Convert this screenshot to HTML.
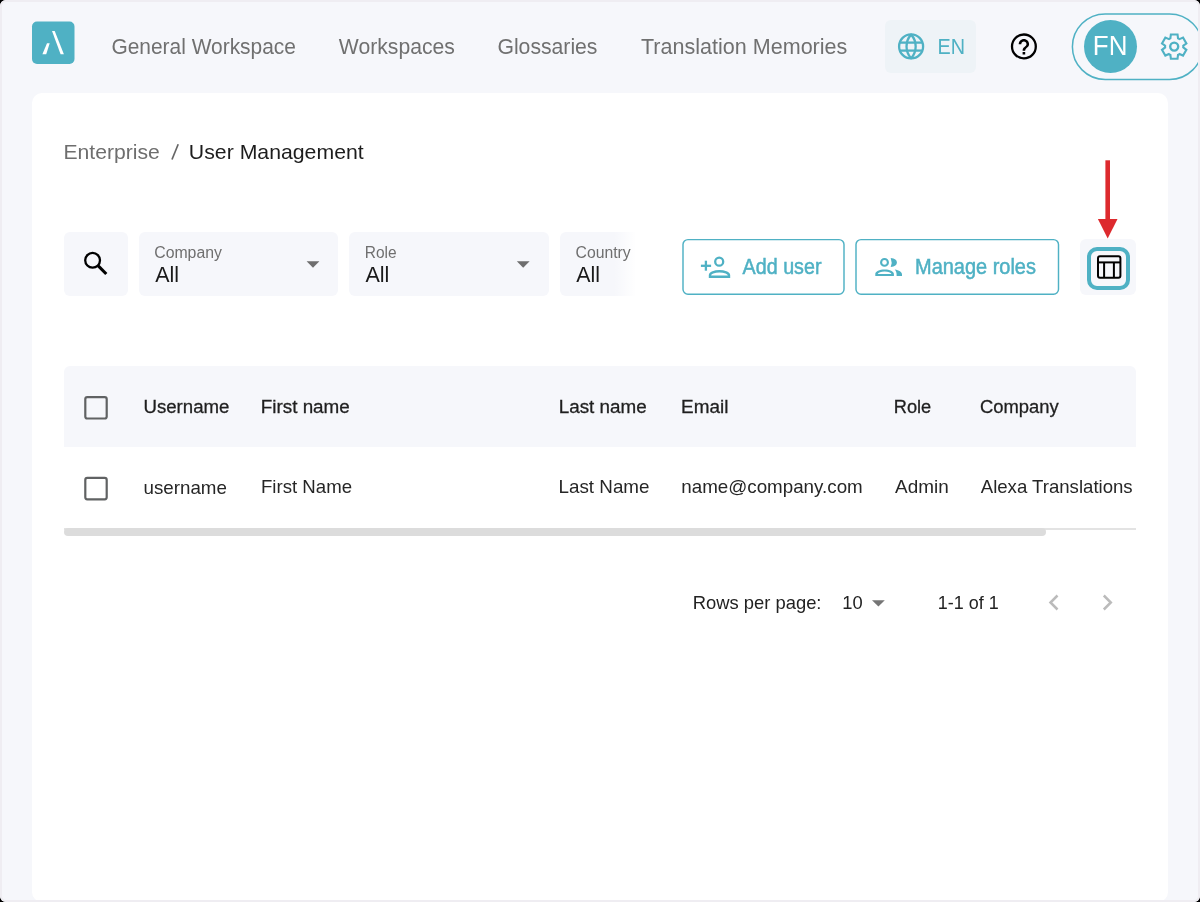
<!DOCTYPE html>
<html><head><meta charset="utf-8">
<style>
html,body{margin:0;padding:0}
body{width:1200px;height:902px;overflow:hidden;position:relative;background:#f6f7fb;font-family:"Liberation Sans",sans-serif}
.abs{position:absolute}
#card{left:32px;top:93px;width:1136px;height:809px;background:#fff;border-radius:10px}
.fbox{background:#f6f7fb;border-radius:6px}
#frame{left:0;top:0;width:1196px;height:898px;border:2px solid #efedf2;border-radius:6px;box-shadow:0 0 0 40px #000;pointer-events:none}
svg text{font-family:"Liberation Sans",sans-serif}
</style></head>
<body>
<div id="card" class="abs"></div>
<!-- EN button bg -->
<div class="abs" style="left:885px;top:20px;width:91px;height:53px;background:#eef3f7;border-radius:6px"></div>
<!-- pill -->
<!-- avatar -->
<div class="abs" style="left:1084px;top:20px;width:53px;height:53px;background:#4fb1c4;border-radius:50%"></div>
<!-- filter boxes -->
<div class="abs fbox" style="left:64px;top:232px;width:64px;height:64px"></div>
<div class="abs fbox" style="left:139px;top:232px;width:199px;height:64px"></div>
<div class="abs fbox" style="left:349px;top:232px;width:200px;height:64px"></div>
<div class="abs fbox" style="left:560px;top:232px;width:76px;height:64px;border-radius:6px 0 0 6px"></div>
<div class="abs" style="left:614px;top:228px;width:22px;height:72px;background:linear-gradient(to right,rgba(255,255,255,0),#fff)"></div>
<!-- buttons -->
<div class="abs fbox" style="left:1080px;top:239px;width:56px;height:56px"></div>
<div class="abs" style="left:1087px;top:247px;width:35px;height:35px;border:4px solid #4fb1c4;border-radius:10px"></div>
<!-- table header -->
<div class="abs" style="left:64px;top:366.3px;width:1072px;height:81px;background:#f6f7fb;border-radius:6px 6px 0 0"></div>
<div class="abs" style="left:64px;top:528px;width:1072px;height:1.5px;background:#e3e3e3"></div>
<div class="abs" style="left:64px;top:528px;width:982px;height:8px;background:#dcdcdc;border-radius:4px"></div>

<svg class="abs" style="left:0;top:0;will-change:transform" width="1200" height="902" viewBox="0 0 1200 902">
  <!-- logo -->
  <rect x="32" y="21.5" width="42.5" height="42.5" rx="5" fill="#4fb1c4"/>
  <path d="M52 31 H54.7 L63.9 54.3 H60.6 Z" fill="#fff"/>
  <path d="M47 43.3 H49.7 L46.2 54.3 H42.4 Z" fill="#fff"/>
  <!-- globe -->
  <g stroke="#4fb1c4" stroke-width="2.3" fill="none">
    <circle cx="911.1" cy="46.4" r="12"/>
    <path d="M911.1 34.6 A17.5 17.5 0 0 0 911.1 58.2 A17.5 17.5 0 0 0 911.1 34.6Z" stroke-linejoin="round"/>
    <line x1="899.5" y1="42.6" x2="922.7" y2="42.6"/>
    <line x1="899.5" y1="50.6" x2="922.7" y2="50.6"/>
  </g>
  <!-- help -->
  <circle cx="1023.9" cy="46.4" r="11.9" stroke="#000" stroke-width="2.3" fill="none"/>
  <path transform="translate(1008.3,31.2) scale(1.3)" fill="#000" d="M11 18h2v-2h-2v2zm1-12c-2.21 0-4 1.79-4 4h2c0-1.1.9-2 2-2s2 .9 2 2c0 2-3 1.75-3 5h2c0-2.25 3-2.5 3-5 0-2.21-1.79-4-4-4z"/>
  <!-- avatar text -->
  <!-- gear -->
  <path fill="none" stroke="#4fb1c4" stroke-width="69.2" stroke-linejoin="miter" transform="translate(1174.2,46.6) scale(0.03036) translate(-480,480)" d="m370-80-16-128q-13-5-24.5-12T307-235l-119 50L78-375l103-78q-1-7-1-13.5v-27q0-6.5 1-13.5L78-585l110-190 119 50q11-8 23-15t24-12l16-128h220l16 128q13 5 24.5 12t22.5 15l119-50 110 190-103 78q1 7 1 13.5v27q0 6.5-2 13.5l103 78-110 190-118-50q-11 8-23 15t-24 12L590-80H370Z"/>
  <circle cx="1174.2" cy="46.6" r="4" stroke="#4fb1c4" stroke-width="2.4" fill="none"/>
  <rect x="1072.4" y="13.9" width="130" height="65.6" rx="32.8" stroke="#4fb1c4" stroke-width="1.5" fill="none"/>

  <!-- breadcrumb -->

  <!-- search icon -->
  <g stroke="#000" fill="none">
    <circle cx="92.6" cy="260.3" r="7.4" stroke-width="2.3"/>
    <line x1="98" y1="265.7" x2="106.3" y2="274" stroke-width="3.1"/>
  </g>
  <!-- selects -->
  <path d="M306.6 261.2 h12.8 l-6.4 6.6z" fill="#6e6e6e"/>
  <path d="M516.8 261.2 h12.8 l-6.4 6.6z" fill="#6e6e6e"/>

  <!-- add user icon -->
  <g stroke="#4fb1c4" stroke-width="2.3" fill="none">
    <line x1="700.9" y1="265.8" x2="711.1" y2="265.8"/>
    <line x1="705.9" y1="260.7" x2="705.9" y2="270.7"/>
    <circle cx="719.2" cy="261.7" r="4"/>
    <path d="M710 276.7 v-1.4 c0-2.4 4.5-4 9.4-4 s9.6 1.6 9.6 4 v1.4 z" stroke-width="2.4"/>
  </g>
  <!-- manage roles icon -->
  <g stroke="#4fb1c4" stroke-width="2.1" fill="none">
    <circle cx="884.5" cy="262.4" r="3.4"/>
    
  </g>
  <path d="M890.7 257.9 A7.3 4.6 0 0 1 890.7 267 A12 12 0 0 0 890.7 257.9Z" fill="#4fb1c4"/>
  <path fill="#4fb1c4" fill-rule="evenodd" d="M875.3 276 V274 C875.3 271.2 879.5 269.4 884.6 269.4 S893.9 271.2 893.9 274 V276 Z M877.7 274 C878.3 272.5 881 271.6 884.6 271.6 S890.9 272.5 891.5 274 Z"/>
  <path d="M894.7 269.6 C899 270.3 902 272 902 274.5 V276 H896.6 V274.5 C896.6 272.5 895.9 270.8 894.7 269.6Z" fill="#4fb1c4"/>

  <!-- table icon -->
  <g stroke="#000" stroke-width="2" fill="none">
    <rect x="1098" y="256.3" width="22.4" height="21.5" rx="2"/>
    <line x1="1098" y1="262.4" x2="1120.4" y2="262.4"/>
    <line x1="1104.1" y1="262.4" x2="1104.1" y2="277.8"/>
    <line x1="1113.9" y1="262.4" x2="1113.9" y2="277.8"/>
  </g>
  <!-- red arrow -->
  <rect x="1105.4" y="160.3" width="4.6" height="60" fill="#dd2a2e"/>
  <path d="M1097.9 219 h19.6 l-9.8 19.5z" fill="#dd2a2e"/>

  <!-- checkboxes -->
  <rect x="85.3" y="397.1" width="21.4" height="21.4" rx="2" stroke="#606263" stroke-width="2.2" fill="none"/>
  <rect x="85.3" y="477.9" width="21.4" height="21.4" rx="2" stroke="#606263" stroke-width="2.2" fill="none"/>

  <!-- pagination -->
  <path d="M872 600.2 h12.8 l-6.4 6.4z" fill="#757575"/>
  <g stroke="#bbbbbb" stroke-width="2.5" fill="none">
    <path d="M1057.5 595.5 l-7 7 l7 7"/>
    <path d="M1103.8 595.5 l7 7 l-7 7"/>
  </g>
  <line x1="178.2" y1="144.3" x2="172" y2="159.5" stroke="#666" stroke-width="1.7"/>
  <rect x="683" y="239.6" width="161" height="54.7" rx="5" stroke="#4fb1c4" stroke-width="1.45" fill="none"/>
  <rect x="856" y="239.6" width="202.5" height="54.7" rx="5" stroke="#4fb1c4" stroke-width="1.45" fill="none"/>
  <text x="111.45" y="53.8" font-size="21.7" fill="#707070" textLength="184.48" lengthAdjust="spacingAndGlyphs">General Workspace</text>
  <text x="338.82" y="53.8" font-size="21.7" fill="#707070" textLength="116.03" lengthAdjust="spacingAndGlyphs">Workspaces</text>
  <text x="497.44" y="53.8" font-size="21.7" fill="#707070" textLength="100.01" lengthAdjust="spacingAndGlyphs">Glossaries</text>
  <text x="641.03" y="53.8" font-size="21.7" fill="#707070" textLength="206.33" lengthAdjust="spacingAndGlyphs">Translation Memories</text>
  <text x="937.57" y="54.2" font-size="22" fill="#4fb1c4" textLength="27.53" lengthAdjust="spacingAndGlyphs">EN</text>
  <text x="1092.87" y="55.4" font-size="27.5" fill="#ffffff" textLength="34.58" lengthAdjust="spacingAndGlyphs">FN</text>
  <text x="63.47" y="158.8" font-size="20.8" fill="#6e6e6e" textLength="96.36" lengthAdjust="spacingAndGlyphs">Enterprise</text>
  <text x="188.89" y="158.8" font-size="20.8" fill="#1d1d1d" textLength="174.79" lengthAdjust="spacingAndGlyphs">User Management</text>
  <text x="154.21" y="258.3" font-size="16" fill="#6f6f6f" textLength="67.72" lengthAdjust="spacingAndGlyphs">Company</text>
  <text x="364.73" y="258.3" font-size="16" fill="#6f6f6f" textLength="31.86" lengthAdjust="spacingAndGlyphs">Role</text>
  <text x="575.51" y="258.3" font-size="16" fill="#6f6f6f" textLength="55.21" lengthAdjust="spacingAndGlyphs">Country</text>
  <text x="155.16" y="282.1" font-size="21.8" fill="#1a1a1a" textLength="23.84" lengthAdjust="spacingAndGlyphs">All</text>
  <text x="365.46" y="282.1" font-size="21.8" fill="#1a1a1a" textLength="23.95" lengthAdjust="spacingAndGlyphs">All</text>
  <text x="576.26" y="282.1" font-size="21.8" fill="#1a1a1a" textLength="23.74" lengthAdjust="spacingAndGlyphs">All</text>
  <text x="742.61" y="273.8" font-size="21.3" fill="#4fb1c4" stroke="#4fb1c4" stroke-width="0.5" textLength="78.86" lengthAdjust="spacingAndGlyphs">Add user</text>
  <text x="915.01" y="274" font-size="21.3" fill="#4fb1c4" stroke="#4fb1c4" stroke-width="0.5" textLength="120.94" lengthAdjust="spacingAndGlyphs">Manage roles</text>
  <text x="143.43" y="412.9" font-size="18.7" fill="#1f1f1f" stroke="#1f1f1f" stroke-width="0.3" textLength="86.05" lengthAdjust="spacingAndGlyphs">Username</text>
  <text x="260.70" y="412.8" font-size="18.7" fill="#1f1f1f" stroke="#1f1f1f" stroke-width="0.3" textLength="89.16" lengthAdjust="spacingAndGlyphs">First name</text>
  <text x="558.71" y="412.8" font-size="18.7" fill="#1f1f1f" stroke="#1f1f1f" stroke-width="0.3" textLength="87.96" lengthAdjust="spacingAndGlyphs">Last name</text>
  <text x="681.10" y="412.8" font-size="18.7" fill="#1f1f1f" stroke="#1f1f1f" stroke-width="0.3" textLength="47.31" lengthAdjust="spacingAndGlyphs">Email</text>
  <text x="893.75" y="412.8" font-size="18.7" fill="#1f1f1f" stroke="#1f1f1f" stroke-width="0.3" textLength="37.51" lengthAdjust="spacingAndGlyphs">Role</text>
  <text x="980.03" y="412.8" font-size="18.7" fill="#1f1f1f" stroke="#1f1f1f" stroke-width="0.3" textLength="78.75" lengthAdjust="spacingAndGlyphs">Company</text>
  <text x="143.50" y="493.5" font-size="18.6" fill="#262626" textLength="83.34" lengthAdjust="spacingAndGlyphs">username</text>
  <text x="260.97" y="493.4" font-size="18.6" fill="#262626" textLength="91.08" lengthAdjust="spacingAndGlyphs">First Name</text>
  <text x="558.56" y="493.4" font-size="18.6" fill="#262626" textLength="90.96" lengthAdjust="spacingAndGlyphs">Last Name</text>
  <text x="681.26" y="493.4" font-size="18.6" fill="#262626" textLength="181.46" lengthAdjust="spacingAndGlyphs">name@company.com</text>
  <text x="895.06" y="493.4" font-size="18.6" fill="#262626" textLength="53.66" lengthAdjust="spacingAndGlyphs">Admin</text>
  <text x="980.76" y="493.4" font-size="18.6" fill="#262626" textLength="151.92" lengthAdjust="spacingAndGlyphs">Alexa Translations</text>
  <text x="692.69" y="608.8" font-size="18.5" fill="#222222" textLength="128.80" lengthAdjust="spacingAndGlyphs">Rows per page:</text>
  <text x="842.21" y="608.8" font-size="18.5" fill="#222222" textLength="20.40" lengthAdjust="spacingAndGlyphs">10</text>
  <text x="937.84" y="608.8" font-size="18.5" fill="#222222" textLength="60.81" lengthAdjust="spacingAndGlyphs">1-1 of 1</text>
</svg>
<div id="frame" class="abs"></div>
</body></html>
